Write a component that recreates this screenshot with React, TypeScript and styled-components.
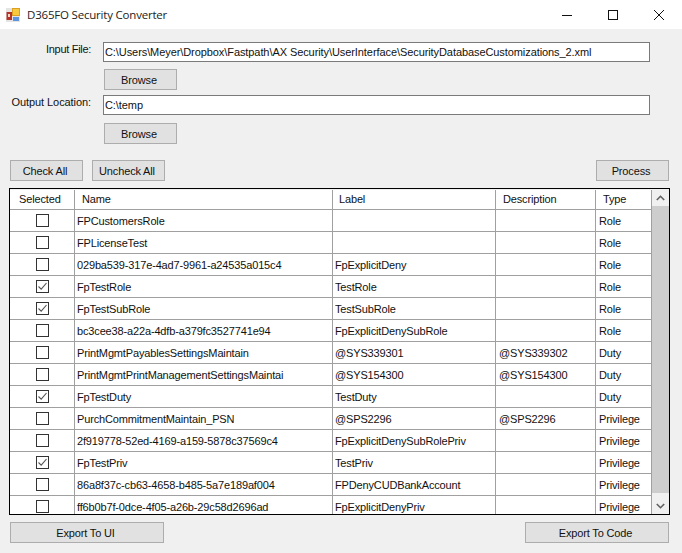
import React from "react";
import styled, { createGlobalStyle } from "styled-components";

const GlobalStyle = createGlobalStyle`
  html, body { margin: 0; padding: 0; background: #f0f0f0; }
  body { font-family: "Liberation Sans", Arial, sans-serif; font-size: 11px; color: #111; }
`;

const Window = styled.div`
  width: 682px;
  height: 553px;
  overflow: hidden;
  display: flex;
  flex-direction: column;
`;

const TitleBar = styled.div`
  height: 29px;
  background: #fff;
  display: flex;
  align-items: center;
  padding-left: 6px;
`;

const AppIcon = styled.svg`
  width: 14px;
  height: 14px;
  margin-right: 7px;
`;

const Title = styled.span`
  flex: 1;
  font-family: "Open Sans", "Liberation Sans", sans-serif;
  font-size: 11.5px;
  letter-spacing: -0.2px;
  color: #222;
`;

const WinButton = styled.div`
  width: 46px;
  height: 29px;
  display: flex;
  align-items: center;
  justify-content: center;
`;

const Form = styled.div`
  flex: 1;
  display: flex;
  flex-direction: column;
  padding: 13px 13px 0 10px;
`;

const FieldRow = styled.div<{ $mt?: number }>`
  display: flex;
  align-items: flex-start;
  margin-top: ${(p) => p.$mt ?? 0}px;
`;

const FieldLabel = styled.label<{ $ls: number }>`
  width: 81px;
  margin-right: 12px;
  text-align: right;
  white-space: nowrap;
  line-height: 14px;
  letter-spacing: ${(p) => p.$ls}px;
`;

const TextBox = styled.div`
  width: 547px;
  height: 20px;
  box-sizing: border-box;
  border: 1px solid #7a7a7a;
  background: #fff;
  padding-left: 1px;
  line-height: 19px;
  letter-spacing: -0.08px;
  white-space: nowrap;
  overflow: hidden;
`;

const Button = styled.button<{ $w: number }>`
  width: ${(p) => p.$w}px;
  height: 21px;
  box-sizing: border-box;
  border: 1px solid #adadad;
  background: #e1e1e1;
  font: inherit;
  letter-spacing: -0.15px;
  color: #111;
  padding: 0 3px 0 0;
  flex: none;
`;

const BrowseRow = styled.div<{ $mt: number }>`
  margin-top: ${(p) => p.$mt}px;
  padding-left: 94px;
  height: 21px;
`;

const ActionRow = styled.div`
  display: flex;
  gap: 9px;
  margin-top: 16px;
`;

const Spacer = styled.div`
  flex: 1;
`;

const GridFrame = styled.div`
  margin: 7px 0 0 -1px;
  width: 661px;
  height: 327px;
  box-sizing: border-box;
  border: 1px solid #000;
  background: #f0f0f0;
  display: flex;
  overflow: hidden;
`;

const Rows = styled.div`
  width: 642px;
  overflow: hidden;
  padding-top: 1px;
  letter-spacing: -0.15px;
`;

const Row = styled.div`
  display: grid;
  grid-template-columns: 65px 258px 163px 100px 56px;
  height: 22px;
`;

const HeaderRow = styled(Row)`
  height: 20px;
`;

const HeaderCell = styled.div<{ $pl: number }>`
  box-sizing: border-box;
  background: #fff;
  border-right: 1px solid #a0a0a0;
  border-bottom: 1px solid #a0a0a0;
  padding-left: ${(p) => p.$pl}px;
  line-height: 19px;
  white-space: nowrap;
  overflow: hidden;
`;

const Cell = styled.div<{ $pl?: number }>`
  box-sizing: border-box;
  background: #fff;
  border-right: 1px solid #a0a0a0;
  border-bottom: 1px solid #a0a0a0;
  padding-left: ${(p) => p.$pl ?? 3}px;
  line-height: 22px;
  white-space: nowrap;
  overflow: hidden;
`;

const CheckCell = styled(Cell)`
  display: flex;
  align-items: center;
  justify-content: center;
  padding: 0 0 1px 1px;
`;

const CheckBox = styled.div`
  width: 13px;
  height: 13px;
  box-sizing: border-box;
  border: 1px solid #333;
  background: #fff;
  display: flex;
  align-items: center;
  justify-content: center;
`;

const ScrollBar = styled.div`
  width: 17px;
  flex: none;
  display: flex;
  flex-direction: column;
  background: #f0f0f0;
`;

const ScrollArrow = styled.div`
  height: 17px;
  display: flex;
  align-items: center;
  justify-content: center;
  flex: none;
`;

const ScrollTrack = styled.div`
  flex: 1;
  display: flex;
`;

const ScrollThumb = styled.div`
  flex: 1;
  margin-bottom: 4px;
  background: #cdcdcd;
`;

const BottomRow = styled.div`
  display: flex;
  justify-content: space-between;
  margin-top: 7px;
`;

type Item = { name: string; label: string; desc: string; type: string; checked?: boolean };

const items: Item[] = [
  { name: "FPCustomersRole", label: "", desc: "", type: "Role" },
  { name: "FPLicenseTest", label: "", desc: "", type: "Role" },
  { name: "029ba539-317e-4ad7-9961-a24535a015c4", label: "FpExplicitDeny", desc: "", type: "Role" },
  { name: "FpTestRole", label: "TestRole", desc: "", type: "Role", checked: true },
  { name: "FpTestSubRole", label: "TestSubRole", desc: "", type: "Role", checked: true },
  { name: "bc3cee38-a22a-4dfb-a379fc3527741e94", label: "FpExplicitDenySubRole", desc: "", type: "Role" },
  { name: "PrintMgmtPayablesSettingsMaintain", label: "@SYS339301", desc: "@SYS339302", type: "Duty" },
  { name: "PrintMgmtPrintManagementSettingsMaintai", label: "@SYS154300", desc: "@SYS154300", type: "Duty" },
  { name: "FpTestDuty", label: "TestDuty", desc: "", type: "Duty", checked: true },
  { name: "PurchCommitmentMaintain_PSN", label: "@SPS2296", desc: "@SPS2296", type: "Privilege" },
  { name: "2f919778-52ed-4169-a159-5878c37569c4", label: "FpExplicitDenySubRolePriv", desc: "", type: "Privilege" },
  { name: "FpTestPriv", label: "TestPriv", desc: "", type: "Privilege", checked: true },
  { name: "86a8f37c-cb63-4658-b485-5a7e189af004", label: "FPDenyCUDBankAccount", desc: "", type: "Privilege" },
  { name: "ff6b0b7f-0dce-4f05-a26b-29c58d2696ad", label: "FpExplicitDenyPriv", desc: "", type: "Privilege" },
];

export default function App() {
  return (
    <Window>
      <GlobalStyle />
      <TitleBar>
        <AppIcon viewBox="0 0 14 14">
          <rect x="0" y="0" width="14" height="14" fill="#e4e4e4" />
          <rect x="0.5" y="4" width="5.5" height="8" fill="#b5342a" />
          <rect x="2" y="6" width="2" height="3" fill="#f0d9c8" />
          <rect x="6" y="0" width="8" height="8" fill="#d9a021" />
          <rect x="7" y="1" width="6" height="6" fill="#f7c93e" />
          <rect x="7" y="9" width="6" height="4" fill="#5c95dd" />
        </AppIcon>
        <Title>D365FO Security Converter</Title>
        <WinButton>
          <svg width="10" height="10" viewBox="0 0 10 10">
            <path d="M0 5.5H10" stroke="#111" strokeWidth="1" />
          </svg>
        </WinButton>
        <WinButton>
          <svg width="10" height="10" viewBox="0 0 10 10">
            <rect x="0.5" y="0.5" width="9" height="9" fill="none" stroke="#111" />
          </svg>
        </WinButton>
        <WinButton>
          <svg width="10" height="10" viewBox="0 0 10 10">
            <path d="M0 0L10 10M10 0L0 10" stroke="#111" strokeWidth="1" />
          </svg>
        </WinButton>
      </TitleBar>
      <Form>
        <FieldRow>
          <FieldLabel $ls={-0.3}>Input File:</FieldLabel>
          <TextBox>C:\Users\Meyer\Dropbox\Fastpath\AX Security\UserInterface\SecurityDatabaseCustomizations_2.xml</TextBox>
        </FieldRow>
        <BrowseRow $mt={7}>
          <Button $w={73}>Browse</Button>
        </BrowseRow>
        <FieldRow $mt={5}>
          <FieldLabel $ls={-0.08}>Output Location:</FieldLabel>
          <TextBox>C:\temp</TextBox>
        </FieldRow>
        <BrowseRow $mt={8}>
          <Button $w={73}>Browse</Button>
        </BrowseRow>
        <ActionRow>
          <Button $w={73}>Check All</Button>
          <Button $w={73}>Uncheck All</Button>
          <Spacer />
          <Button $w={73}>Process</Button>
        </ActionRow>
        <GridFrame>
          <Rows>
            <HeaderRow>
              <HeaderCell $pl={9}>Selected</HeaderCell>
              <HeaderCell $pl={7}>Name</HeaderCell>
              <HeaderCell $pl={6}>Label</HeaderCell>
              <HeaderCell $pl={7}>Description</HeaderCell>
              <HeaderCell $pl={7}>Type</HeaderCell>
            </HeaderRow>
            {items.map((item) => (
              <Row key={item.name}>
                <CheckCell>
                  <CheckBox>
                    {item.checked && (
                      <svg width="11" height="11" viewBox="0 0 11 11">
                        <path d="M1.5 5.5L4.2 8.2L9.5 2" fill="none" stroke="#555" strokeWidth="1.1" />
                      </svg>
                    )}
                  </CheckBox>
                </CheckCell>
                <Cell $pl={2}>{item.name}</Cell>
                <Cell $pl={2}>{item.label}</Cell>
                <Cell>{item.desc}</Cell>
                <Cell>{item.type}</Cell>
              </Row>
            ))}
          </Rows>
          <ScrollBar>
            <ScrollArrow>
              <svg width="9" height="6" viewBox="0 0 9 6">
                <path d="M0.8 5L4.5 1.3L8.2 5" fill="none" stroke="#606060" strokeWidth="1.6" />
              </svg>
            </ScrollArrow>
            <ScrollTrack>
              <ScrollThumb />
            </ScrollTrack>
            <ScrollArrow>
              <svg width="9" height="6" viewBox="0 0 9 6">
                <path d="M0.8 1L4.5 4.7L8.2 1" fill="none" stroke="#606060" strokeWidth="1.6" />
              </svg>
            </ScrollArrow>
          </ScrollBar>
        </GridFrame>
        <BottomRow>
          <Button $w={154}>Export To UI</Button>
          <Button $w={144}>Export To Code</Button>
        </BottomRow>
      </Form>
    </Window>
  );
}
